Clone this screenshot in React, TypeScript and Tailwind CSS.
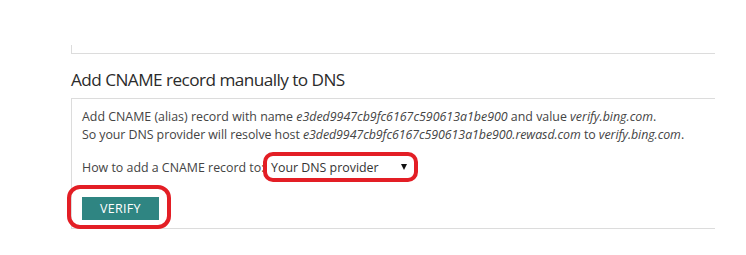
export default function App() {
  const font = { fontFamily: '"Open Sans", "Noto Sans", sans-serif' };
  return (
    <div className="relative w-[746px] h-[255px] bg-white overflow-hidden" style={font}>
      <div className="ml-[71px] mt-[45px] w-[644px] h-[9px] border-l border-b border-[#dcdcdc]" />
      <h2 className="ml-[71px] mt-[14px] text-[17.2px] leading-[24px] text-[#2b2b2b] tracking-[-0.55px]">
        Add CNAME record manually to DNS
      </h2>
      <div className="ml-[71px] mt-[6px] w-[644px] h-[131px] border-l border-t border-b border-[#dcdcdc] pl-[10px] pt-[9px] text-[12.4px] leading-[17.5px] text-[#444]">
        <p>
          Add CNAME (alias) record with name <i>e3ded9947cb9fc6167c590613a1be900</i> and value <i>verify.bing.com</i>.
        </p>
        <p className="tracking-[-0.06px]">
          So your DNS provider will resolve host <i>e3ded9947cb9fc6167c590613a1be900.rewasd.com</i> to <i>verify.bing.com</i>.
        </p>
        <div className="mt-[16px] flex items-center h-[18px]">
          <span className="w-[188px] whitespace-nowrap">How to add a CNAME record to:</span>
          <div className="relative w-[142px] h-[18px] bg-white flex items-center pl-[1px] text-[#333]">
            <span>Your DNS provider</span>
            <span className="absolute right-[5px] top-[5px] w-0 h-0 border-l-[3px] border-r-[3px] border-t-[6px] border-l-transparent border-r-transparent border-t-[#111]" />
          </div>
        </div>
        <div className="mt-[20px]">
          <button className="w-[77px] h-[23px] bg-[#2f8582] text-white text-[12.5px] tracking-[0.3px] flex items-center justify-center">
            VERIFY
          </button>
        </div>
      </div>
      <div className="absolute left-[263px] top-[152px] w-[155px] h-[30px] border-[4px] border-[#e31e25] rounded-[10px]" />
      <div className="absolute left-[67px] top-[185px] w-[104px] h-[44px] border-[4px] border-[#e31e25] rounded-[13px]" />
    </div>
  );
}
